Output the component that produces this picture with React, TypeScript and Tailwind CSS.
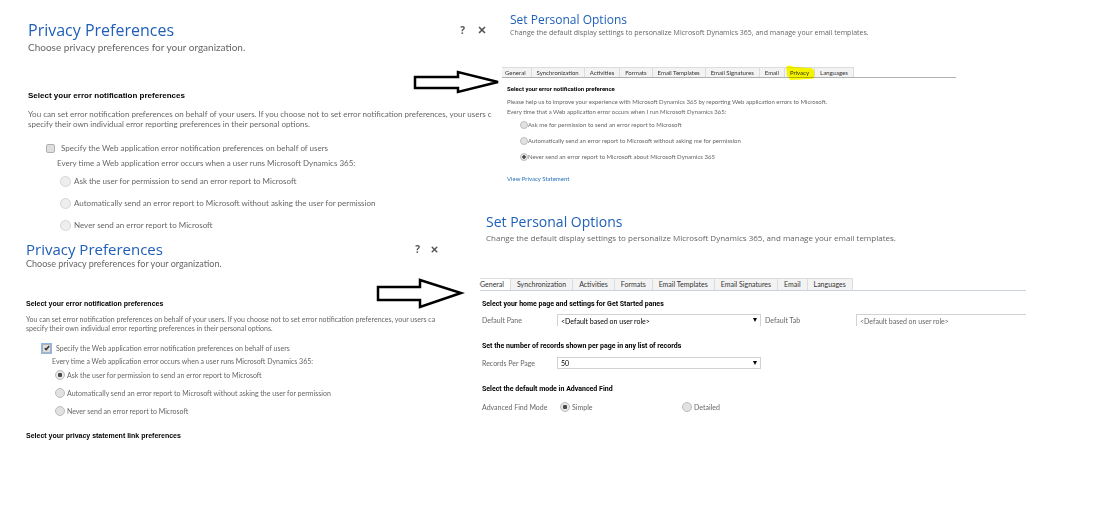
import { useId } from "react";
import type { ReactNode } from "react";
import { X } from "lucide-react";

type Choice = { label: string; checked?: boolean; disabled?: boolean };

const Radio = ({ name, choice, inputClass, labelClass }: { name: string; choice: Choice; inputClass: string; labelClass: string }) => {
  const id = useId();
  return (
    <div className="flex items-center">
      <input
        id={id}
        type="radio"
        name={name}
        defaultChecked={choice.checked}
        disabled={choice.disabled}
        className={`appearance-none shrink-0 rounded-full border border-[#bcbcbc] bg-[#e2e2e2] disabled:border-[#d6d6d6] disabled:bg-[#eeeeee] checked:bg-[radial-gradient(circle,#4a4a4a_35%,#e8e8e8_45%)] ${inputClass}`}
      />
      <label htmlFor={id} className={`whitespace-nowrap ${labelClass}`}>{choice.label}</label>
    </div>
  );
};

const Tick = ({ label, checked, inputClass, labelClass }: { label: string; checked?: boolean; inputClass: string; labelClass: string }) => {
  const id = useId();
  return (
    <div className="flex h-3 items-center">
      <span className="grid place-items-center">
        <input
          id={id}
          type="checkbox"
          defaultChecked={checked}
          className={`peer col-start-1 row-start-1 appearance-none border border-[#b0b0b0] bg-[#dedede] ${inputClass}`}
        />
        <svg viewBox="0 0 8 8" className="pointer-events-none col-start-1 row-start-1 hidden size-2 peer-checked:block" fill="none" stroke="#333" strokeWidth="1.5">
          <path d="M1.8 4.2 3.2 5.6 6.2 2" />
        </svg>
      </span>
      <label htmlFor={id} className={`whitespace-nowrap ${labelClass}`}>{label}</label>
    </div>
  );
};

const Select = ({ label, value, className, arrow = true }: { label: string; value: string; className: string; arrow?: boolean }) => {
  const id = useId();
  return (
    <>
      <label htmlFor={id} className="pl-1 first:pl-0">{label}</label>
      <div className="relative">
        <select id={id} className={`block h-3 w-full appearance-none border-[#d0d3d6] pl-[3px] leading-[10px] ${className}`}>
          <option>{value}</option>
        </select>
        {arrow && (
          <svg viewBox="0 0 6 6" className="pointer-events-none absolute top-1 right-1 size-1" fill="#000">
            <path d="M0 0h6L3 6z" />
          </svg>
        )}
      </div>
    </>
  );
};

const HeaderButtons = ({ className }: { className: string }) => (
  <div className={`flex items-center text-[#555] ${className}`}>
    <button aria-label="Help" className="font-['Open_Sans',sans-serif] text-[10px] leading-3 font-bold">?</button>
    <button aria-label="Close"><X className="size-full" strokeWidth={4} /></button>
  </div>
);

const Arrow = ({ points, className }: { points: string; className: string }) => (
  <svg className={`pointer-events-none absolute overflow-visible ${className}`} fill="#fff" stroke="#000" strokeWidth="2.5">
    <polygon points={points} />
  </svg>
);

const Tabs = ({ tabs, active, marked, className, tabClass }: { tabs: string[]; active?: string; marked?: string; className: string; tabClass: string }) => (
  <nav className={`flex border-b ${className}`}>
    {tabs.map((tab) => (
      <button
        key={tab}
        className={`relative border-t border-r border-[#dcdcdc] whitespace-nowrap text-[#333] ${tab === active ? "bg-white" : "bg-[#f3f3f3]"} ${tabClass}`}
      >
        {tab}
        {tab === marked && (
          <svg viewBox="0 0 30 15" className="pointer-events-none absolute -top-[3px] left-0 h-[15px] w-[30px] mix-blend-multiply" fill="#ffff00">
            <path d="M2 1C4 0 6 1 9 2L26 3C29 4 30 6 29 12C29 14 27 14 24 14L6 15C4 15 4 13 4 12C1 12 2 9 2 7C1 5 1 3 2 1Z" />
          </svg>
        )}
      </button>
    ))}
  </nav>
);

const Title = ({ children, className }: { children: ReactNode; className: string }) => (
  <h1 className={`font-['Open_Sans',sans-serif] whitespace-nowrap text-[#1f5fb8] ${className}`}>{children}</h1>
);

const Bold = ({ children, className }: { children: ReactNode; className: string }) => (
  <h2 className={`leading-[10px] font-bold whitespace-nowrap text-black ${className}`}>{children}</h2>
);

const orgChoices = [
  "Ask the user for permission to send an error report to Microsoft",
  "Automatically send an error report to Microsoft without asking the user for permission",
  "Never send an error report to Microsoft",
];

const personalChoices = [
  "Ask me for permission to send an error report to Microsoft",
  "Automatically send an error report to Microsoft without asking me for permission",
  "Never send an error report to Microsoft about Microsoft Dynamics 365",
];

const OrgPrivacyDisabled = () => (
  <section className="-mr-2 pt-5 pl-7 text-[8px] leading-[10px]">
    <div className="flex items-center justify-between">
      <Title className="text-[16px] leading-5">Privacy Preferences</Title>
      <HeaderButtons className="gap-3 pr-[5px] [&_svg]:size-[10px]" />
    </div>
    <p className="text-[10px] leading-[14px]">Choose privacy preferences for your organization.</p>
    <Bold className="mt-[37px] font-['Liberation_Sans',sans-serif]">Select your error notification preferences</Bold>
    <p className="mt-2 whitespace-nowrap">
      You can set error notification preferences on behalf of your users. If you choose not to set error notification preferences, your users c
      <br />
      specify their own individual error reporting preferences in their personal options.
    </p>
    <div className="mt-[13px] pl-[18px]">
      <Tick label="Specify the Web application error notification preferences on behalf of users" inputClass="size-[9px] rounded-[2px]" labelClass="pl-[6px]" />
    </div>
    <p className="mt-1 pl-[29px]">Every time a Web application error occurs when a user runs Microsoft Dynamics 365:</p>
    <div className="mt-[7px] flex flex-col gap-[10px] pl-8">
      {orgChoices.map((label) => (
        <Radio key={label} name="org-disabled" choice={{ label, disabled: true }} inputClass="size-[11px]" labelClass="pl-[3px] leading-3" />
      ))}
    </div>
  </section>
);

const OrgPrivacy = () => (
  <section className="mr-[39px] pt-2 pl-[26px] text-[7px] leading-[9px]">
    <div className="flex items-center justify-between">
      <Title className="text-[15px] leading-5">Privacy Preferences</Title>
      <HeaderButtons className="gap-[10px] pr-[6px] [&_svg]:size-[9px]" />
    </div>
    <p className="text-[9px] leading-[10px]">Choose privacy preferences for your organization.</p>
    <Bold className="mt-[30px] font-['Liberation_Sans',sans-serif]">Select your error notification preferences</Bold>
    <p className="mt-[6px] whitespace-nowrap">
      You can set error notification preferences on behalf of your users. If you choose not to set error notification preferences, your users ca
      <br />
      specify their own individual error reporting preferences in their personal options.
    </p>
    <div className="mt-[9px] pl-4">
      <Tick label="Specify the Web application error notification preferences on behalf of users" checked inputClass="size-[9px] outline outline-[#8ab8ea]" labelClass="pl-[5px]" />
    </div>
    <p className="mt-[2px] pl-[26px] leading-[10px]">Every time a Web application error occurs when a user runs Microsoft Dynamics 365:</p>
    <div className="mt-1 flex flex-col gap-2 pl-[29px]">
      {orgChoices.map((label, i) => (
        <Radio key={label} name="org" choice={{ label, checked: i === 0 }} inputClass="size-[10px]" labelClass="pl-[2px] leading-[10px]" />
      ))}
    </div>
    <Bold className="mt-[15px] font-['Liberation_Sans',sans-serif]">Select your privacy statement link preferences</Bold>
  </section>
);

const PersonalPrivacy = () => (
  <section className="mr-36 ml-[18px] pt-3 text-[6px] leading-[10px]">
    <Title className="pl-2 text-[12px] leading-4">Set Personal Options</Title>
    <p className="pl-2 font-['Open_Sans',sans-serif] text-[7px] whitespace-nowrap">
      Change the default display settings to personalize Microsoft Dynamics 365, and manage your email templates.
    </p>
    <Tabs
      tabs={["General", "Synchronization", "Activities", "Formats", "Email Templates", "Email Signatures", "Email", "Privacy", "Languages"]}
      marked="Privacy"
      className="mt-[29px] border-[#b0b0b0]"
      tabClass="px-[5px] leading-[9px] first:pl-[3px]"
    />
    <div className="pl-[5px]">
      <Bold className="mt-[6px] font-[Roboto,sans-serif]">Select your error notification preference</Bold>
      <p className="mt-[3px] whitespace-nowrap">
        Please help us to improve your experience with Microsoft Dynamics 365 by reporting Web application errors to Microsoft.
        <br />
        Every time that a Web application error occurs when I run Microsoft Dynamics 365:
      </p>
      <div className="mt-[3px] flex flex-col gap-[6px] pl-[13px]">
        {personalChoices.map((label, i) => (
          <Radio key={label} name="personal" choice={{ label, checked: i === 2 }} inputClass="size-2" labelClass="leading-[10px]" />
        ))}
      </div>
      <a href="#privacy" className="mt-3 block text-[#2a72b8]">View Privacy Statement</a>
    </div>
  </section>
);

const PersonalGeneral = () => (
  <section className="mr-[74px] -ml-1 pt-7 text-[7px] leading-[10px]">
    <Title className="pl-[6px] text-[14px] leading-5">Set Personal Options</Title>
    <p className="pl-[6px] font-['Open_Sans',sans-serif] text-[8px] leading-[11px] whitespace-nowrap">
      Change the default display settings to personalize Microsoft Dynamics 365, and manage your email templates.
    </p>
    <Tabs
      tabs={["General", "Synchronization", "Activities", "Formats", "Email Templates", "Email Signatures", "Email", "Languages"]}
      active="General"
      className="mt-[35px] border-[#ccd3dc]"
      tabClass="px-[6px] leading-[11px] first:pl-0"
    />
    <div className="pl-[2px]">
      <Bold className="mt-2 font-[Roboto,sans-serif]">Select your home page and settings for Get Started panes</Bold>
      <div className="mt-[5px] grid grid-cols-[75px_204px_95px_1fr] items-center">
        <Select label="Default Pane" value="<Default based on user role>" className="border-x border-t text-black" />
        <Select label="Default Tab" value="<Default based on user role>" className="border-t border-l" arrow={false} />
      </div>
      <Bold className="mt-[15px] font-[Roboto,sans-serif]">Set the number of records shown per page in any list of records</Bold>
      <div className="mt-[6px] grid grid-cols-[75px_204px] items-center">
        <Select label="Records Per Page" value="50" className="border text-black" />
      </div>
      <Bold className="mt-[15px] font-[Roboto,sans-serif]">Select the default mode in Advanced Find</Bold>
      <div className="mt-2 grid grid-cols-[78px_122px_1fr] items-center">
        <span>Advanced Find Mode</span>
        <Radio name="find" choice={{ label: "Simple", checked: true }} inputClass="size-[10px]" labelClass="pl-[2px]" />
        <Radio name="find" choice={{ label: "Detailed" }} inputClass="size-[10px]" labelClass="pl-[2px]" />
      </div>
    </div>
  </section>
);

export default function App() {
  return (
    <main className="relative flex min-h-screen bg-white font-[Lato,'Open_Sans',sans-serif] text-[#666]">
      <div className="w-[44%]">
        <OrgPrivacyDisabled />
        <OrgPrivacy />
      </div>
      <div className="min-w-0 flex-1">
        <PersonalPrivacy />
        <PersonalGeneral />
      </div>
      <Arrow className="top-[71px] left-[414px] h-[22px] w-[88px]" points="1,6 44,6 44,1 84,11 44,21 44,17 1,17" />
      <Arrow className="top-[279px] left-[377px] h-[29px] w-[88px]" points="1,8 43,8 43,1 84,14 43,28 43,21 1,21" />
    </main>
  );
}
